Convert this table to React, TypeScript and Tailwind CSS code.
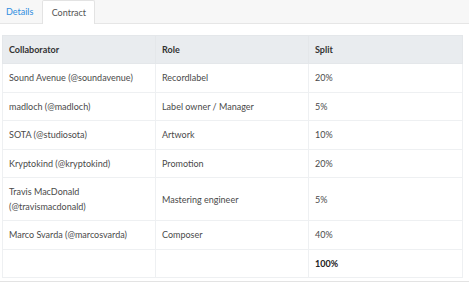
import React from "react";

const rows: [string, string, string][] = [
  ["Sound Avenue (@soundavenue)", "Recordlabel", "20%"],
  ["madloch (@madloch)", "Label owner / Manager", "5%"],
  ["SOTA (@studiosota)", "Artwork", "10%"],
  ["Kryptokind (@kryptokind)", "Promotion", "20%"],
  ["Travis MacDonald (@travismacdonald)", "Mastering engineer", "5%"],
  ["Marco Svarda (@marcosvarda)", "Composer", "40%"],
];

export default function App() {
  return (
    <div
      className="w-[469px] h-[283px] bg-white overflow-hidden text-[#4a4a4a]"
      style={{ fontFamily: "Lato, 'Open Sans', sans-serif" }}
    >
      <div className="h-[24px] bg-[#f7f7f7] border-b border-[#e6e6e6] flex items-end pl-[4px]">
        <div className="h-[23px] flex items-center px-[2px] text-[9px] text-[#2f8ee0] mr-[7px]">Details</div>
        <div className="h-[24px] -mb-px w-[53px] bg-white border border-b-0 border-[#e3e3e3] rounded-t-[2px] flex items-center justify-center text-[9px] text-[#555]">
          Contract
        </div>
      </div>
      <div className="pt-[11px] pl-[2px]">
        <table className="w-[460px] border-collapse text-[9px] leading-[15px] table-fixed">
          <colgroup>
            <col className="w-[153px]" />
            <col className="w-[153px]" />
            <col className="w-[154px]" />
          </colgroup>
          <thead>
            <tr className="bg-[#e9ecef]">
              {["Collaborator", "Role", "Split"].map((h) => (
                <th key={h} className="text-left font-bold text-[#333] h-[28px] px-[6px] border border-[#e4e7ea]">
                  {h}
                </th>
              ))}
            </tr>
          </thead>
          <tbody>
            {rows.map((r) => (
              <tr key={r[0]}>
                {r.map((c, i) => (
                  <td key={i} className={`px-[6px] border border-[#eef0f2] ${r[0].startsWith("Travis") ? "h-[43px]" : "h-[28.5px]"}`}>
                    {c}
                  </td>
                ))}
              </tr>
            ))}
            <tr>
              <td className="px-[6px] h-[28px] border border-[#eef0f2]"></td>
              <td className="px-[6px] h-[28px] border border-[#eef0f2]"></td>
              <td className="px-[6px] h-[28px] border border-[#eef0f2] font-bold text-[#222]">100%</td>
            </tr>
          </tbody>
        </table>
        <div className="mt-[3px] -ml-[2px] w-[469px] border-t border-[#e3e3e3]"></div>
      </div>
    </div>
  );
}
